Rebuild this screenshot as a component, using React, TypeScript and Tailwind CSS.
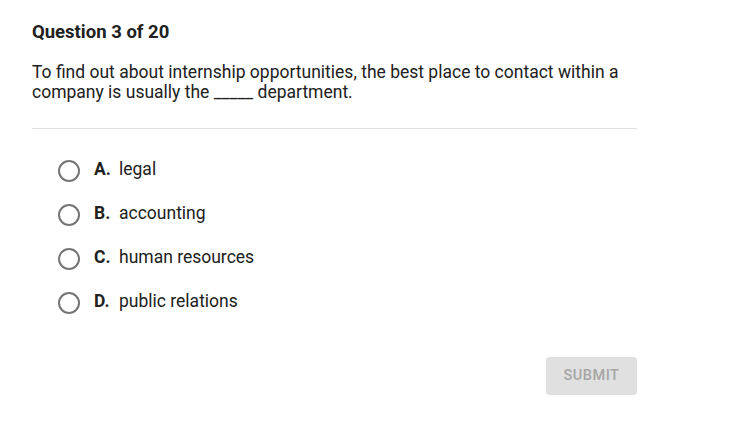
import React from 'react';

const options = [
  { letter: 'A.', text: 'legal' },
  { letter: 'B.', text: 'accounting' },
  { letter: 'C.', text: 'human resources' },
  { letter: 'D.', text: 'public relations' },
];

export default function App() {
  return (
    <div className="w-[732px] h-[437px] bg-white font-['Roboto',sans-serif] text-[#212121]">
      <div className="w-[605px] ml-[32px] pt-[21px]">
        <h2 className="text-[18.5px] font-bold leading-[22px]">Question 3 of 20</h2>
        <p className="mt-[19px] text-[17.5px] leading-[20px]">
          To find out about internship opportunities, the best place to contact within a company is usually the _____ department.
        </p>
        <div className="mt-[26px] border-t border-[#e0e0e0]" />
        <div className="flex flex-col pt-[30px] pl-[26px] gap-[24px]">
          {options.map((o) => (
            <label key={o.letter} className="flex items-center h-[20px] cursor-pointer">
              <span className="w-[22px] h-[22px] rounded-full border-2 border-[#757575] mt-[3px]" />
              <span className="ml-[14px] font-bold text-[17.5px] w-[25px]">{o.letter}</span>
              <span className="text-[17.5px]">{o.text}</span>
            </label>
          ))}
        </div>
        <div className="flex justify-end mt-[46px]">
          <button className="w-[91px] h-[38px] rounded-[4px] bg-[#e0e0e0] text-[#a6a6a6] text-[14.5px] font-medium tracking-[0.5px]">
            SUBMIT
          </button>
        </div>
      </div>
    </div>
  );
}
